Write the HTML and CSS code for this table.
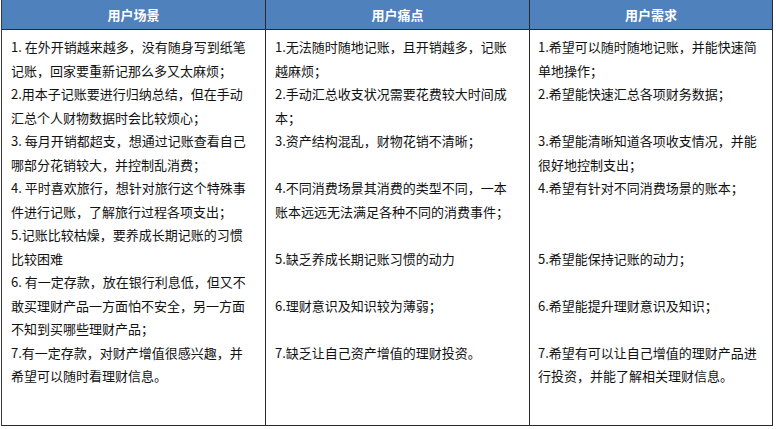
FILE: index.html
```html
<!DOCTYPE html>
<html lang="zh-CN">
<head>
<meta charset="utf-8">
<link rel="stylesheet" href="styles.css">
</head>
<body>
<div class="table">
  <div class="th">用户场景</div>
  <div class="th">用户痛点</div>
  <div class="th th-last">用户需求</div>

  <div class="td">
    <div class="ln">1. 在外开销越来越多，没有随身写到纸笔</div>
    <div class="ln">记账，回家要重新记那么多又太麻烦；</div>
    <div class="ln">2.用本子记账要进行归纳总结，但在手动</div>
    <div class="ln">汇总个人财物数据时会比较烦心；</div>
    <div class="ln">3. 每月开销都超支，想通过记账查看自己</div>
    <div class="ln">哪部分花销较大，并控制乱消费；</div>
    <div class="ln">4. 平时喜欢旅行，想针对旅行这个特殊事</div>
    <div class="ln">件进行记账，了解旅行过程各项支出；</div>
    <div class="ln">5.记账比较枯燥，要养成长期记账的习惯</div>
    <div class="ln">比较困难</div>
    <div class="ln">6. 有一定存款，放在银行利息低，但又不</div>
    <div class="ln">敢买理财产品一方面怕不安全，另一方面</div>
    <div class="ln">不知到买哪些理财产品；</div>
    <div class="ln">7.有一定存款，对财产增值很感兴趣，并</div>
    <div class="ln">希望可以随时看理财信息。</div>
  </div>

  <div class="td">
    <div class="ln">1.无法随时随地记账，且开销越多，记账</div>
    <div class="ln">越麻烦；</div>
    <div class="ln">2.手动汇总收支状况需要花费较大时间成</div>
    <div class="ln">本；</div>
    <div class="ln">3.资产结构混乱，财物花销不清晰；</div>
    <div class="ln">&nbsp;</div>
    <div class="ln">4.不同消费场景其消费的类型不同，一本</div>
    <div class="ln">账本远远无法满足各种不同的消费事件；</div>
    <div class="ln">&nbsp;</div>
    <div class="ln">5.缺乏养成长期记账习惯的动力</div>
    <div class="ln">&nbsp;</div>
    <div class="ln">6.理财意识及知识较为薄弱；</div>
    <div class="ln">&nbsp;</div>
    <div class="ln">7.缺乏让自己资产增值的理财投资。</div>
  </div>

  <div class="td td-last">
    <div class="ln">1.希望可以随时随地记账，并能快速简</div>
    <div class="ln">单地操作；</div>
    <div class="ln">2.希望能快速汇总各项财务数据；</div>
    <div class="ln">&nbsp;</div>
    <div class="ln">3.希望能清晰知道各项收支情况，并能</div>
    <div class="ln">很好地控制支出；</div>
    <div class="ln">4.希望有针对不同消费场景的账本；</div>
    <div class="ln">&nbsp;</div>
    <div class="ln">&nbsp;</div>
    <div class="ln">5.希望能保持记账的动力；</div>
    <div class="ln">&nbsp;</div>
    <div class="ln">6.希望能提升理财意识及知识；</div>
    <div class="ln">&nbsp;</div>
    <div class="ln">7.希望有可以让自己增值的理财产品进</div>
    <div class="ln">行投资，并能了解相关理财信息。</div>
  </div>
</div>
</body>
</html>
```

FILE: styles.css
```css
html, body {
  margin: 0;
  padding: 0;
  background: #ffffff;
}

body {
  font-family: "Noto Sans CJK SC", "Microsoft YaHei", sans-serif;
  font-size: 13px;
  color: #111111;
}

.table {
  display: grid;
  grid-template-columns: 264px 264px 243px;
  grid-template-rows: 30px 396px;
  width: 774px;
  margin-left: 1px;
  border-left: 1px solid #3a3a3a;
}

.th {
  background: #4f81bd;
  color: #ffffff;
  font-weight: bold;
  font-size: 13px;
  display: flex;
  align-items: center;
  justify-content: center;
  border-right: 1px solid #2a2a2a;
  border-bottom: 1px solid #2a2a2a;
}

.td {
  padding: 5px 0 0 9px;
  border-right: 1px solid #2a2a2a;
  border-bottom: 1px solid #2a2a2a;
  overflow: hidden;
}

.td-last {
  padding-left: 8px;
}

.ln {
  height: 23.5px;
  line-height: 23.5px;
  white-space: nowrap;
}
```
